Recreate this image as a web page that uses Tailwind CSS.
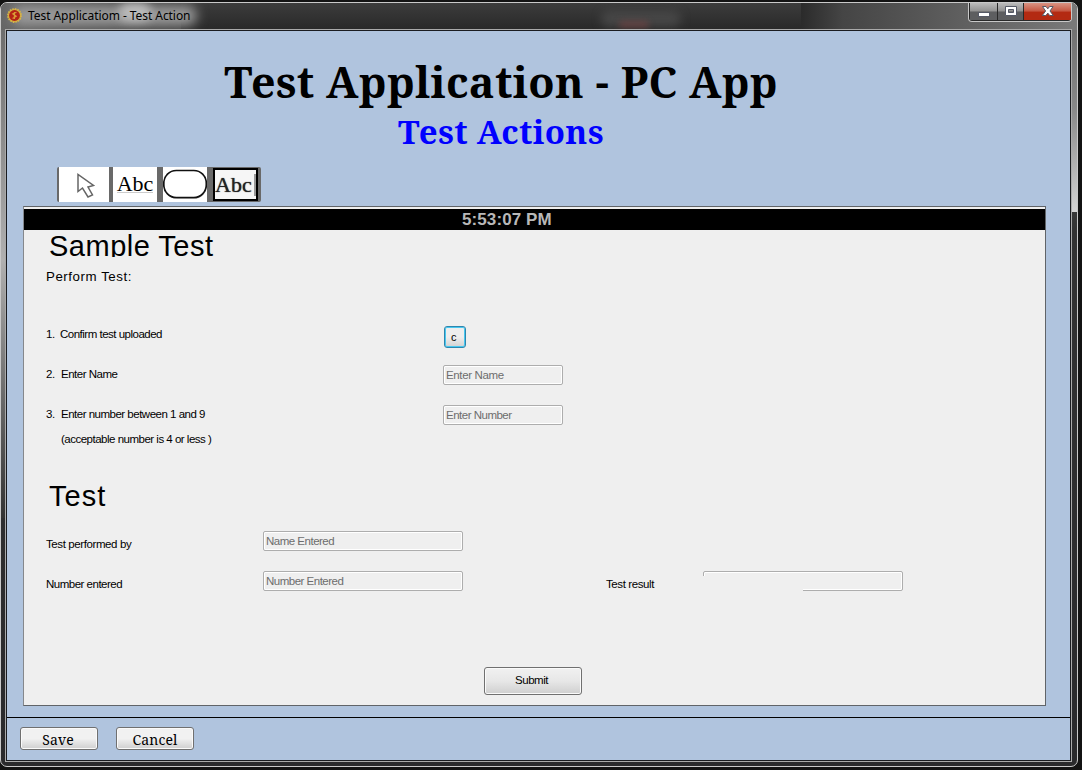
<!DOCTYPE html>
<html lang="en">
<head>
<meta charset="utf-8">
<title>Test Application</title>
<script src="https://cdn.jsdelivr.net/npm/@tailwindcss/browser@4"></script>
</head>
<body class="w-[1082px] h-[770px] overflow-hidden bg-[#131313] pt-[2px] font-['Liberation_Sans',sans-serif] text-black">
<div class="w-[1078px] h-[765px] rounded-[7px] border border-[#c9c9c9] p-px bg-linear-to-b from-[#777] from-0% via-[#333] via-30% to-[#2a2a2c] flex flex-col relative overflow-hidden">
  <div class="absolute left-0 top-0 w-[5px] h-[515px] bg-linear-to-b from-[#666] via-[#b0b0b0] to-[#333]"></div>
  <div class="absolute right-0 top-0 w-[5px] h-[209px] bg-linear-to-b from-[#6a6a6a] via-[#888] to-[#d5d5d5]"></div>
  <header class="absolute inset-x-0 top-0 h-[27px] bg-linear-to-r from-[#666] from-0% via-[#303030] via-20% to-[#777] flex items-start">
    <div class="absolute inset-y-0 bg-linear-to-b from-[#3c3c3c] to-[#292929] left-[180px] right-[270px]"></div>
    <div class="absolute left-[800px] right-0 top-0 h-[27px] bg-linear-to-r from-[#2b2b2b] from-0% via-[#454545] via-15% to-[#7a7a7a]"></div>
    <div class="absolute left-[600px] top-[8px] w-[80px] h-[16px] rounded-full bg-[#555]/60 blur-[5px]"></div>
    <div class="absolute left-[618px] top-[18px] w-[30px] h-[7px] rounded-full bg-[#844]/50 blur-[3px]"></div>
    <div class="absolute left-[10px] top-[2px] w-[186px] h-[21px] rounded-full bg-[#999] blur-[6px]"></div>
    <div class="absolute left-[118px] top-0 w-[32px] h-[18px] rounded-full bg-[#bbb] blur-[5px]"></div>
    <svg class="relative ml-[5px] mt-[4px] w-[17px] h-[17px] shrink-0" viewBox="0 0 17 17"><circle cx="8.5" cy="8.5" r="6.6" fill="#d0a83c" stroke="#d9b545" stroke-width="1.6" stroke-dasharray="1.6 1"/><circle cx="8.5" cy="8.5" r="5.4" fill="#b52216"/><path d="M10.5 5.2 6.8 6.8l3.4 2.4-3.6 2.3M8.4 5v7" fill="none" stroke="#d99a35" stroke-width="1.2"/></svg>
    <span class="relative ml-[5px] mt-[4px] whitespace-nowrap text-[12px] leading-[18px] tracking-[-0.06px] font-['Noto_Sans',sans-serif]">Test Applicatiom - Test Action</span>
    <div class="absolute left-[967px] top-0 flex h-[19px] w-[104px] rounded-b-[4px] border border-t-0 border-[#c8c8c8] bg-[#292929] gap-px px-px pb-px overflow-hidden">
      <div class="w-[27px] bg-linear-to-b from-[#bbb] from-0% via-[#909090] via-49% to-[#5d5e60] to-51% flex justify-center"><svg class="w-[27px] h-[18px]" viewBox="0 0 27 18"><rect x="8.5" y="9.5" width="11" height="4" fill="#fff" stroke="#555966"/></svg></div>
      <div class="w-[25px] bg-linear-to-b from-[#bbb] from-0% via-[#909090] via-49% to-[#5d5e60] to-51%"><svg class="w-[25px] h-[18px]" viewBox="0 0 25 18"><path fill-rule="evenodd" d="M7.500 3.500h11v9h-11zM10.500 6.500h5v3h-5z" fill="#fff" stroke="#555966"/></svg></div>
      <div class="w-[47px] bg-linear-to-b from-[#d99383] from-0% via-[#c65a45] via-45% to-[#b32a12] to-55%"><svg class="w-[47px] h-[18px]" viewBox="0 0 47 18"><path d="M18.500 3.500h3.500l1.800 2.300L25.600 3.500h3.500L26 8l3.300 4.500h-3.600l-1.900-2.400-1.900 2.400h-3.600L21.600 8z" fill="#fff" stroke="#555966"/></svg></div>
    </div>
  </header>

  <main class="relative mt-[25px] ml-[3px] w-[1067px] h-[733px] border border-[#aaa] bg-[#1a1c20] p-px">
    <div class="h-full w-[1063px] bg-[#b0c4de] flex flex-col">
      <div class="h-[136px] w-[988px] flex flex-col items-center font-['Noto_Serif','DejaVu_Serif_Condensed','DejaVu_Serif',serif] font-bold whitespace-nowrap">
        <h1 class="mt-[23px] h-[56px] leading-[56px] text-[43px] tracking-[0.33px]">Test Application - PC App</h1>
        <h2 class="h-[44px] leading-[43px] text-[33px] tracking-[0.35px] text-[#0000ff]">Test Actions</h2>
      </div>
      <div class="ml-[50px] flex h-[35px] w-[204px] rounded-[2px] overflow-hidden bg-[#696969] font-['Liberation_Serif',serif]">
        <div class="ml-[2px] w-[50px] bg-white"><svg class="w-[50px] h-[35px]" viewBox="0 0 50 35"><path d="M19 7.500v17l4.500-3.500 5.500 9 4.500-2-4.500-8 5.500-1.500z" fill="#fff" stroke="#666" stroke-width="1.500"/></svg></div>
        <div class="ml-[4px] w-[44px] bg-white text-[22px] leading-[33px] text-center"><span class="inline-block h-[26px] border-b border-[#ccc]">Abc</span></div>
        <div class="ml-[6px] w-[44px] bg-white"><svg class="w-[44px] h-[35px]" viewBox="0 0 44 35"><rect x="1" y="5" width="43" height="27" rx="13.500" fill="#aaa"/><rect x=".8" y="3.500" width="42.500" height="27" rx="12.500" fill="#fff" stroke="#111" stroke-width="1.700"/></svg></div>
        <div class="ml-[6px] w-[45px] h-[33px] mt-px border-2 border-black bg-[#f6f6f6] text-[22px] leading-[29px] flex"><span class="text-[#222] [text-shadow:0_0_1px_#333]">Abc</span><span class="w-[2px] h-[22px] mt-[4px] ml-[2px] bg-[#999]"></span></div>
      </div>
      <section class="ml-[16px] mt-[4px] w-[1023px] h-[500px] border border-[#606468] border-l-[#85888c] bg-[#efefef] pt-[2px] text-[11.5px] tracking-[-0.5px] flex flex-col">
        <div class="h-[21px] w-full bg-black text-[#b8b8b8] font-bold text-[17px] leading-[22px] tracking-[0.1px] pl-[438px] shrink-0">5:53:07 PM</div>
        <h3 class="ml-[25px] h-[27px] leading-[32px] text-[29px] tracking-[0.5px] overflow-hidden whitespace-nowrap shrink-0">Sample Test</h3>
        <p class="ml-[22px] h-[56px] pt-[10px] leading-[20px] text-[13.300px] tracking-[0.55px] shrink-0">Perform Test:</p>
        <div class="h-[40px] pl-[22px] flex items-start"><span class="w-[14px] mt-[14px] leading-[14px]">1.</span><span class="w-[384px] mt-[14px] leading-[14px]">Confirm test uploaded</span><button class="mt-[13px] size-[22px] rounded-[3px] border border-[#2e86ae] shadow-[inset_0_0_0_1px_#48c8f0] bg-linear-to-b from-[#eee] from-50% to-[#d2d2d2] text-[11px] leading-[18px] pr-[3px]">c</button></div>
        <div class="h-[40px] pl-[22px] flex items-start"><span class="w-[15px] mt-[14px] leading-[14px]">2.</span><span class="w-[382px] mt-[14px] leading-[14px]">Enter Name</span><div class="mt-[12px] w-[120px] h-[20px] rounded-[2px] border border-[#adadad] shadow-[inset_0_0_0_1px_#fff] text-[#6d6d6d] tracking-[-0.35px] pl-[2px] leading-[19px]">Enter Name</div></div>
        <div class="h-[39px] pl-[22px] flex items-start"><span class="w-[15px] mt-[14px] leading-[14px]">3.</span><span class="w-[382px] mt-[14px] leading-[14px]">Enter number between 1 and 9</span><div class="mt-[12px] w-[120px] h-[20px] rounded-[2px] border border-[#adadad] shadow-[inset_0_0_0_1px_#fff] text-[#6d6d6d] pl-[2px] leading-[19px]">Enter Number</div></div>
        <p class="pl-[37px] h-[41px] leading-[14px]">(acceptable number is 4 or less )</p>
        <h3 class="ml-[25px] h-[51px] leading-[46px] text-[29px] tracking-[1px]">Test</h3>
        <div class="h-[40px] pl-[22px] flex items-start"><span class="w-[217px] mt-[13px] leading-[14px] tracking-[-0.4px]">Test performed by</span><div class="mt-[7px] w-[200px] h-[20px] rounded-[2px] border border-[#adadad] shadow-[inset_0_0_0_1px_#fff] text-[#6d6d6d] pl-[2px] leading-[19px]">Name Entered</div></div>
        <div class="h-[103px] pl-[22px] flex items-start"><span class="w-[217px] mt-[13px] leading-[14px]">Number entered</span><div class="mt-[7px] w-[200px] h-[20px] rounded-[2px] border border-[#adadad] shadow-[inset_0_0_0_1px_#fff] text-[#6d6d6d] pl-[2px] leading-[19px]">Number Entered</div><span class="ml-[143px] w-[97px] mt-[13px] leading-[14px] tracking-[-0.4px]">Test result</span><div class="relative mt-[7px] w-[200px] h-[20px] rounded-[2px] border border-[#adadad] shadow-[inset_0_0_0_1px_#fff]"><div class="absolute left-[-1px] top-[4px] w-[100px] h-[16px] bg-[#efefef]"></div></div></div>
        <button class="ml-[460px] w-[98px] h-[28px] shrink-0 rounded-[3px] border border-[#707070] shadow-[inset_0_0_0_1px_#fafafa] bg-linear-to-b from-[#f1f1f1] via-[#e7e7e7] via-50% to-[#cfcfcf] pr-[3px]">Submit</button>
      </section>
      <footer class="mt-[11px] border-t border-black flex-1 flex gap-[18px] pl-[13px] pt-[9px] font-['Noto_Serif','DejaVu_Serif',serif] text-[14px] tracking-[0.15px]">
        <button class="w-[78px] h-[23px] rounded-[3px] border border-[#707070] shadow-[inset_0_0_0_1px_#fafafa] bg-linear-to-b from-[#f1f1f1] from-50% to-[#cfcfcf] leading-[24px] pr-[2px]">Save</button>
        <button class="w-[78px] h-[23px] rounded-[3px] border border-[#707070] shadow-[inset_0_0_0_1px_#fafafa] bg-linear-to-b from-[#f1f1f1] from-50% to-[#cfcfcf] leading-[24px]">Cancel</button>
      </footer>
    </div>
  </main>
</div>
</body>
</html>
